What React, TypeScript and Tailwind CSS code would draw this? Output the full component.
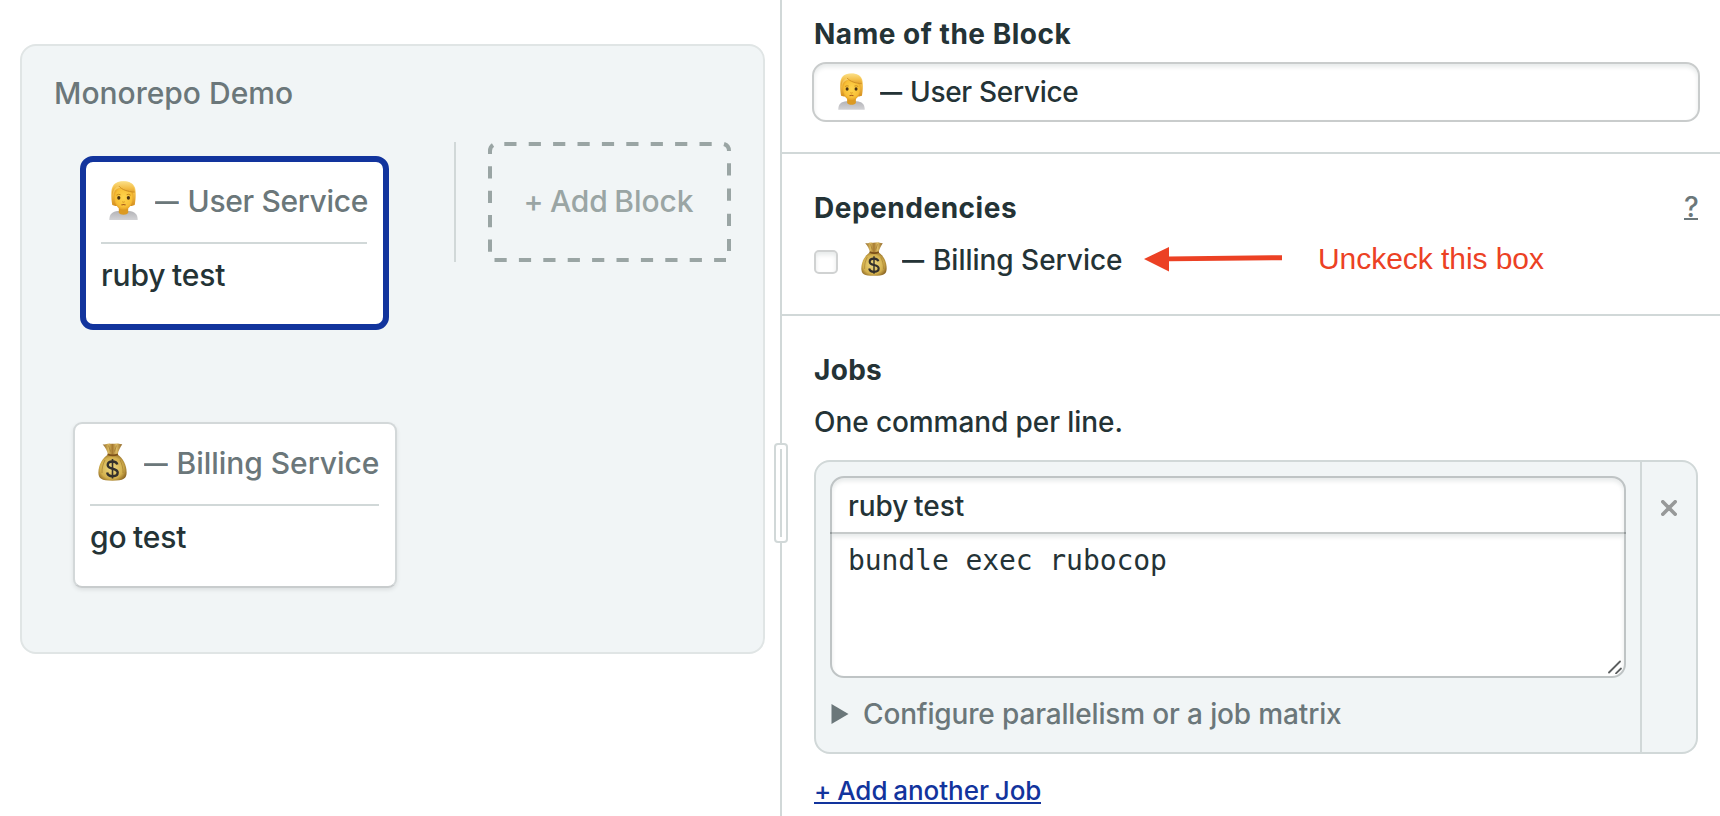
import type { ReactNode } from 'react';

function PersonIcon({ className }: { className: string }) {
  return (
    <svg viewBox="0 0 29 39" className={className} aria-hidden="true">
      <defs>
        <linearGradient id="hair" x1="0" y1="0" x2="0" y2="1">
          <stop offset="0" stopColor="#fbdf86" />
          <stop offset="0.5" stopColor="#f3bd45" />
          <stop offset="1" stopColor="#d58f1e" />
        </linearGradient>
        <radialGradient id="face" cx="0.5" cy="0.45" r="0.6">
          <stop offset="0" stopColor="#ffd54c" />
          <stop offset="0.7" stopColor="#f8bf36" />
          <stop offset="1" stopColor="#dc951f" />
        </radialGradient>
        <linearGradient id="shirt" x1="0" y1="0" x2="0" y2="1">
          <stop offset="0" stopColor="#b3b3b7" />
          <stop offset="1" stopColor="#d3d3d6" />
        </linearGradient>
      </defs>
      <path d="M0.3 39C0.3 33 3.5 30.4 9 30h11c5.500.4 8.700 3 8.700 9z" fill="url(#shirt)" />
      <path d="M9.800 26h9.400v5.500c-1 3-8.400 3-9.400 0z" fill="#dc9a22" />
      <path d="M3.300 24C2 17 2 9 3.200 6.500 5 2 9 .3 14.500.3S24 2 25.900 6.500c1 3 1.200 10.500-.2 17.500l-3 1H6.300z" fill="url(#hair)" />
      <path d="M5 13.500C5 9 9 6.500 14.500 6.500s9.700 2.500 9.700 7c0 9-3.400 15.300-9.700 15.300S5 22.500 5 13.500z" fill="url(#face)" />
      <path d="M3.200 14C4 9.500 6 6.500 10 4.800c3 4.200 9 5.700 15.800 6.200C25.500 3 21 .4 14.500.4 7 .4 2.500 4 3.200 14z" fill="url(#hair)" />
      <path d="M9.800 5c3 3.800 8.800 5.600 15.800 6.200" stroke="#c98a20" strokeWidth="0.9" fill="none" />
      <ellipse cx="9.800" cy="16.800" rx="1.600" ry="1.900" fill="#4a3213" />
      <ellipse cx="19.400" cy="16.800" rx="1.600" ry="1.900" fill="#4a3213" />
      <path d="M7.500 14.200q2-1.500 4-.5M17.700 13.700q2-1 4 .5" stroke="#c08119" strokeWidth="0.900" fill="none" />
      <path d="M13.300 20.800q1.200.8 2.400 0" stroke="#d18b1c" strokeWidth="0.900" fill="none" />
      <path d="M12.400 24q2.100-1 4.200 0" stroke="#a85b1c" strokeWidth="1.200" fill="none" />
    </svg>
  );
}

function MoneyIcon({ className }: { className: string }) {
  return (
    <svg viewBox="0 0 29 38" className={className} aria-hidden="true">
      <defs>
        <radialGradient id="bag" cx="0.47" cy="0.52" r="0.62">
          <stop offset="0" stopColor="#f0dc84" />
          <stop offset="0.65" stopColor="#d3b04d" />
          <stop offset="1" stopColor="#7d561a" />
        </radialGradient>
        <linearGradient id="neck" x1="0" y1="0" x2="1" y2="0">
          <stop offset="0" stopColor="#8c6326" />
          <stop offset="0.3" stopColor="#d8b65c" />
          <stop offset="0.5" stopColor="#a67a31" />
          <stop offset="0.7" stopColor="#dcba62" />
          <stop offset="1" stopColor="#8c6326" />
        </linearGradient>
      </defs>
      <path d="M10 11.500h9.500C25 15 28.600 22 28.600 29.500c0 6-3 8.200-14.200 8.200S.4 35.500.4 29.500C.4 22 4.500 15 10 11.500z" fill="url(#bag)" />
      <path d="M4.600 1.200C7.500 2 9 .4 11.500.6c3 .8 6-.6 8.500-.1 1.800.6 3 .9 4.300.8-2 3-3.800 6-4.600 10.200-2.700 1.500-7.300 1.500-9.800 0C9.200 7.500 7.500 4.500 4.600 1.200z" fill="url(#neck)" />
      <path d="M9.600 11.200c3 1.400 7.500 1.400 10.300 0" stroke="#7d5119" strokeWidth="1.700" fill="none" />
      <path d="M10.500 2.500l2 6M18.500 2.500l-2 6M7 17c-2 4-3.200 8-3 13M22 17c2 4 3.200 8 3 13" stroke="#8a6222" strokeWidth="0.800" fill="none" opacity="0.6" />
      <path d="M19.300 21.500c-.5-2.200-2.300-3-4.800-3-2.800 0-4.800 1.300-4.800 3.500 0 5 10 2.500 10 7.600 0 2.400-2 3.700-5.100 3.700-3 0-5-1.200-5.500-3.700" stroke="#33302c" strokeWidth="2.400" fill="none" />
      <path d="M14.500 16v19.500" stroke="#33302c" strokeWidth="1.600" fill="none" />
    </svg>
  );
}

function Dash({ className }: { className: string }) {
  return <span className={`origin-left scale-x-[0.79] whitespace-nowrap ${className}`}>—</span>;
}

function BlockCard({ icon, name, job, className }: { icon: ReactNode; name: ReactNode; job: string; className: string }) {
  return (
    <div className={`box-border bg-white pl-[15px] pr-4 pt-[19px] ${className}`}>
      <div className="flex h-[40px] items-center pl-2 text-[#6b777a]">
        {icon}
        <Dash className="ml-[17px] w-6 shrink-0" />
        {name}
      </div>
      <div className="mt-[21px] h-[2px] bg-[#d1d8d8]" />
      <div className="mt-[11px] tracking-[-0.1px] [word-spacing:-1.5px]">{job}</div>
    </div>
  );
}

function AddBlock() {
  return (
    <button className="relative ml-8 h-[120px] w-[243px] text-[#9aa5a4]">
      <svg viewBox="0 0 243 120" className="absolute inset-0 size-full" fill="none" stroke="currentColor" strokeWidth="4" aria-hidden="true">
        <path d="M16.300 2H226" strokeDasharray="12.200 12.200" />
        <path d="M6.500 118H238" strokeDasharray="12.200 12.200" />
        <path d="M2 24.300V112" strokeDasharray="12.200 12.200" />
        <path d="M241 21.300V112" strokeDasharray="12.200 13" />
        <path d="M2 12V9Q2 5 5 3" />
        <path d="M236 2Q241 3.500 241 9" />
      </svg>
      <div className="relative -mt-0.5 pr-0.5 tracking-[-0.05px] [word-spacing:-1.5px]">+ Add Block</div>
    </button>
  );
}

function Pipeline() {
  return (
    <aside className="w-[780px] shrink-0 pl-5 pt-11">
      <div className="h-[610px] w-[745px] rounded-2xl border-2 border-[#e0e5e5] bg-[#f1f5f6] pt-[27px] text-[30px] leading-[40px]">
        <h2 className="pl-8 text-[#6b777a]">Monorepo Demo</h2>
        <div className="flex items-start pl-[51px] pt-[29px]">
          <div className="flex w-[324px] flex-col items-center gap-[92px] pt-3.5">
            <BlockCard
              className="mr-px h-[174px] w-[309px] rounded-[13px] border-[6px] border-[#12349d]"
              icon={<PersonIcon className="-mt-0.5 h-[39px] w-[29px] shrink-0" />}
              name={<span className="ml-[8.500px] whitespace-nowrap tracking-[-0.32px]">User Service</span>}
              job="ruby test"
            />
            <BlockCard
              className="h-[166px] w-full rounded-[9px] border-2 border-[#d3d8d9] border-b-[#c8cccd] shadow-[0_2px_4px_rgba(0,0,0,0.09)]"
              icon={<MoneyIcon className="-mt-0.5 h-[38px] w-[29px] shrink-0" />}
              name={<span className="ml-[8.500px] whitespace-nowrap tracking-[-0.04px]">Billing Service</span>}
              job="go test"
            />
          </div>
          <div className="ml-[57px] h-[120px] w-[2px] bg-[#d1d8d8]" />
          <AddBlock />
        </div>
      </div>
    </aside>
  );
}

function Divider() {
  return (
    <div className="relative w-[2px] shrink-0 bg-[#d1d8d8]">
      <div className="absolute -left-1.5 top-[443px] flex h-[100px] w-3.5 justify-center rounded-[4px] border-2 border-[#d1d8d8] bg-white py-1">
        <div className="w-[2px] bg-[#d1d8d8]" />
      </div>
    </div>
  );
}

const inset = 'shadow-[inset_0_3px_4px_rgba(36,60,60,0.11)]';

export default function App() {
  return (
    <div className="flex h-[816px] w-[1720px] overflow-hidden bg-white font-['Inter',sans-serif] text-[28px] font-medium leading-[40px] text-[#243336]">
      <Pipeline />
      <Divider />
      <main className="min-w-0 flex-1">
        <section className="h-[154px] border-b-2 border-[#d1d8d8] pl-8 pt-3.5">
          <h3 className="font-bold tracking-[0.52px]">Name of the Block</h3>
          <div className={`-ml-0.5 mt-2 flex h-[60px] w-[888px] items-center rounded-[14px] border-2 border-[#c9cccc] pl-6 ${inset}`}>
            <PersonIcon className="-mt-0.5 h-[37px] w-[27px] shrink-0" />
            <Dash className="ml-[15px] w-[22px] shrink-0" />
            <span className="ml-[8px] tracking-[-0.3px]">User Service</span>
          </div>
        </section>

        <section className="h-[162px] border-b-2 border-[#d1d8d8] pl-8 pr-[22px] pt-[34px]">
          <div className="flex justify-between">
            <h3 className="font-bold tracking-[0.52px]">Dependencies</h3>
            <a className="h-[32px] w-[14px] border-b-2 border-[#6b777a] text-center leading-[38px] text-[#6b777a]">?</a>
          </div>
          <div className="mt-[11px] flex h-[40px] items-center">
            <span className={`mt-1.5 size-6 rounded-[5px] border-2 border-[#d0d2d2] bg-white ${inset}`} />
            <MoneyIcon className="ml-[23px] h-[36px] w-[26px] shrink-0" />
            <Dash className="ml-[15px] mt-0.5 w-[22px] shrink-0" />
            <span className="ml-[9px] mt-0.5 w-[188px] whitespace-nowrap tracking-[-0.02px]">Billing Service</span>
            <svg viewBox="0 0 138 26" className="ml-[23px] h-[26px] w-[138px] shrink-0" fill="#ec4124" aria-hidden="true">
              <path d="M0 13L25 1v9.500L138 9.200v5L25 15.200V25.500z" />
            </svg>
            <span className="ml-9 font-['Liberation_Sans',sans-serif] text-[30px] font-normal tracking-[-0.05px] text-[#ec4124]">Unckeck this box</span>
          </div>
        </section>

        <section className="pl-8 pt-[34px]">
          <h3 className="font-bold tracking-[0.3px]">Jobs</h3>
          <p className="mt-3 tracking-[-0.08px]">One command per line.</p>
          <div className="mt-[18px] flex h-[294px] w-[884px] rounded-2xl border-2 border-[#d1d8d8] bg-[#f1f5f6]">
            <div className="flex-1 px-3.5 pt-3.5">
              <div className="relative h-[202px] rounded-[14px] border-2 border-[#bfc4c5] bg-white">
                <div className={`h-[54px] rounded-t-xl pl-4 pt-[8px] tracking-[-0.08px] [word-spacing:-1.500px] ${inset}`}>ruby test</div>
                <div className="-mx-0.5 h-[2px] border-x-2 border-[#979d9e] bg-[#c6caca]" />
                <div className={`h-[142px] rounded-b-xl pl-4 pt-[7px] font-['DejaVu_Sans_Mono',monospace] tracking-[-0.08px] ${inset}`}>bundle exec rubocop</div>
                <svg viewBox="0 0 14 14" className="absolute bottom-[2px] right-[2px] size-3.5" stroke="#5c5f60" strokeWidth="1.800" strokeLinecap="round" aria-hidden="true">
                  <path d="M1 12.500L12 1.500M8 13.300L13 8.500" />
                </svg>
              </div>
              <div className="mt-4 flex items-center text-[#6b777a]">
                <svg viewBox="0 0 18 20" className="ml-[1px] h-5 w-[18px]" fill="currentColor" aria-hidden="true">
                  <path d="M0.500 0L17.500 10L0.500 20z" />
                </svg>
                <span className="ml-3.5 tracking-[-0.15px]">Configure parallelism or a job matrix</span>
              </div>
            </div>
            <div className="w-14 border-l-2 border-[#d1d8d8] pl-[18.500px] pt-[38px]">
              <svg viewBox="0 0 16 16" className="size-4" stroke="#979999" strokeWidth="3.600" strokeLinecap="round" aria-label="Remove job">
                <path d="M1.800 1.800L14.200 14.200M14.200 1.800L1.800 14.200" />
              </svg>
            </div>
          </div>
          <a className="mt-4 inline-block h-[34px] border-b-2 border-[#12349d] text-[26px] leading-[41px] tracking-[-0.05px] text-[#12349d] [word-spacing:-1px]">+ Add another Job</a>
        </section>
      </main>
    </div>
  );
}
